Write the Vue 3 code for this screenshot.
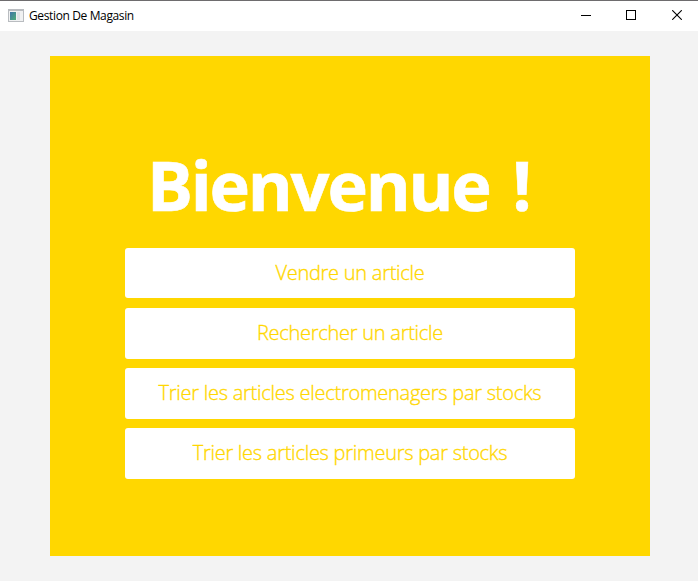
<script setup>
const actions = [
  { label: 'Vendre un article', key: 'sell' },
  { label: 'Rechercher un article', key: 'search' },
  { label: 'Trier les articles electromenagers par stocks', key: 'appliances' },
  { label: 'Trier les articles primeurs par stocks', key: 'produce' }
]
</script>

<template>
  <div class="window">
    <header class="titlebar">
      <svg class="app-icon" width="16" height="13" viewBox="0 0 16 13" shape-rendering="crispEdges">
        <defs>
          <linearGradient id="screen" x1="0" y1="0" x2="1" y2="1">
            <stop offset="0" stop-color="#3f74a8" />
            <stop offset="1" stop-color="#4fae78" />
          </linearGradient>
        </defs>
        <rect width="16" height="13" fill="#b9bcc0" />
        <rect x="1" y="2" width="14" height="10" fill="#f0f1f2" />
        <rect x="2" y="3" width="6" height="8" fill="url(#screen)" />
        <rect x="9" y="3" width="3" height="8" fill="#dfe2e5" />
      </svg>
      <h1 class="title">Gestion De Magasin</h1>
      <div class="controls">
        <button class="control" aria-label="Minimize">
          <svg width="10" height="10" viewBox="0 0 10 10" shape-rendering="crispEdges"><path d="M0 5h10v1H0z" /></svg>
        </button>
        <button class="control" aria-label="Maximize">
          <svg width="10" height="10" viewBox="0 0 10 10" shape-rendering="crispEdges"><path d="M.5.5h9v9h-9z" fill="none" stroke="#000" /></svg>
        </button>
        <button class="control close" aria-label="Close">
          <svg width="10" height="10" viewBox="0 0 10 10"><path d="M.2.2l9.6 9.6M9.8.2L.2 9.8" fill="none" stroke="#000" stroke-width="1.1" /></svg>
        </button>
      </div>
    </header>
    <main class="content">
      <section class="panel">
        <h2 class="welcome">Bienvenue !</h2>
        <nav class="actions">
          <button v-for="a in actions" :key="a.key" class="action" :class="a.key">{{ a.label }}</button>
        </nav>
      </section>
    </main>
  </div>
</template>

<style>
body {
  margin: 0;
}
</style>

<style scoped>
.window {
  box-sizing: border-box;
  width: 698px;
  height: 581px;
  border-top: 1px solid #6e6c6e;
  background: #f3f3f3;
  overflow: hidden;
  font-family: "Open Sans", "Noto Sans", sans-serif;
}
.titlebar {
  display: flex;
  align-items: center;
  height: 30px;
  padding-left: 8px;
  background: #fff;
}
.app-icon {
  flex: none;
  margin-top: -1px;
}
.title {
  margin: 0 0 0 5px;
  font-size: 12px;
  font-weight: 400;
  line-height: 30px;
  letter-spacing: -0.37px;
  white-space: nowrap;
  color: #000;
}
.controls {
  display: flex;
  margin-left: auto;
  padding: 0 16px 2px 0;
  gap: 35px;
}
.control {
  display: flex;
  width: 10px;
  height: 10px;
  padding: 0;
  border: 0;
  background: none;
}
.close {
  margin-left: 1px;
}
.content {
  display: flex;
  justify-content: center;
  padding: 25px 48px 25px 50px;
}
.panel {
  box-sizing: border-box;
  width: 600px;
  height: 500px;
  padding: 83px 75px 0;
  background: #ffd700;
}
.welcome {
  margin: 0 0 0 22px;
  height: 109px;
  font-size: 68.5px;
  font-weight: 700;
  line-height: 92px;
  letter-spacing: -2.2px;
  word-spacing: 7px;
  white-space: nowrap;
  color: #fff;
  -webkit-text-stroke: 0.6px #fff;
}
.actions {
  display: flex;
  flex-direction: column;
  gap: 9px;
}
.action {
  box-sizing: border-box;
  height: 51px;
  padding: 0 0 1px;
  border: 0;
  border-radius: 3px;
  background: #fff;
  font-family: inherit;
  font-size: 20px;
  font-weight: 300;
  line-height: 50px;
  letter-spacing: -0.26px;
  white-space: nowrap;
  color: #ffd700;
  -webkit-text-stroke: 0.35px #ffd700;
}
.sell {
  height: 50px;
  padding-bottom: 0;
  margin-bottom: 1px;
}
</style>
